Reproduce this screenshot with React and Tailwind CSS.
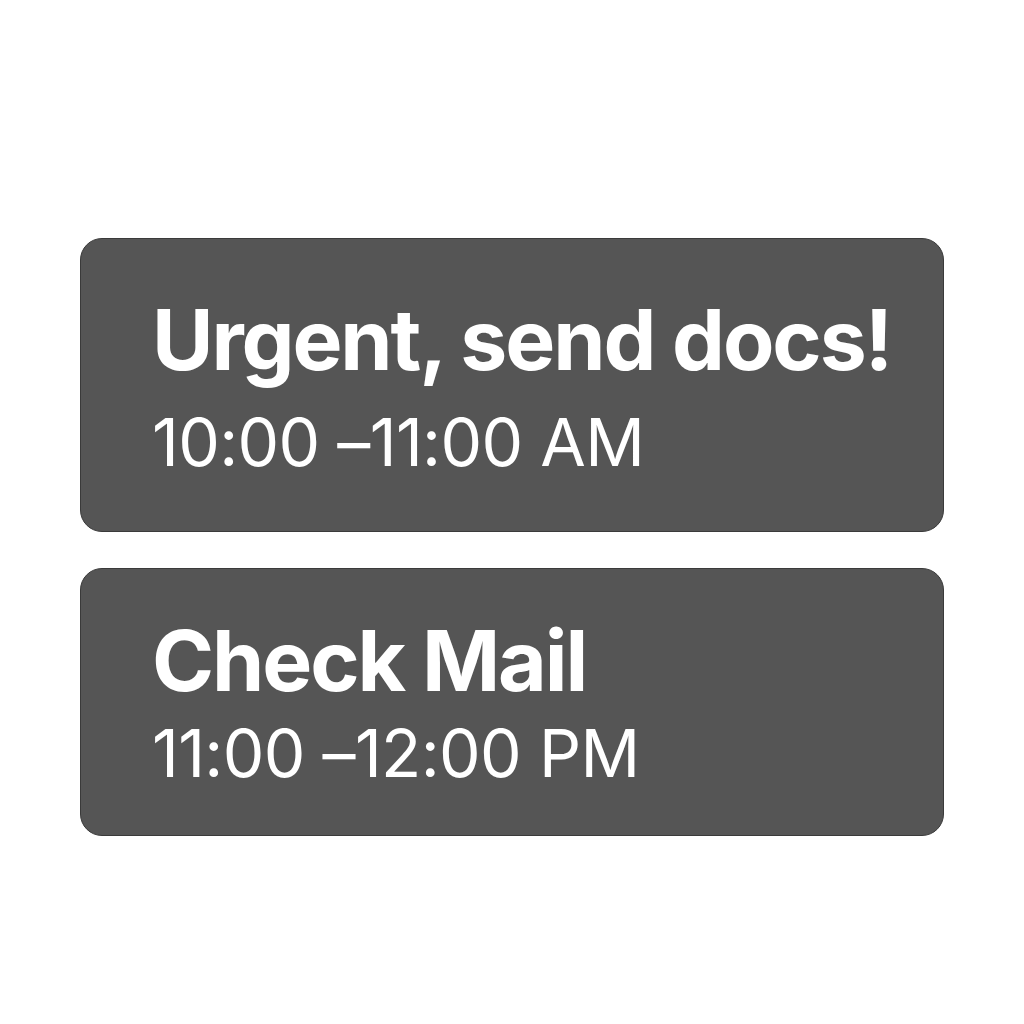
const events = [
  { title: "Urgent, send docs!", time: "10:00 –11:00 AM", box: "h-[294px] pt-[59px]", gap: "mt-[27px]" },
  { title: "Check Mail", time: "11:00 –12:00 PM", box: "h-[268px] pt-[50px]", gap: "mt-[17px]" },
];

export default function App() {
  return (
    <div className="w-[1024px] h-[1024px] bg-white pt-[238px] px-[80px]" style={{ fontFamily: 'Inter, "Noto Sans", sans-serif' }}>
      <div className="flex flex-col gap-[36px]">
        {events.map((e) => (
          <div key={e.title} className={`${e.box} rounded-[22px] bg-[#555555] border border-[#3a3a3a] pl-[71px] text-white`}>
            <div className="text-[84px] leading-none font-bold tracking-[-0.025em]">{e.title}</div>
            <div className={`${e.gap} text-[66px] leading-none font-normal tracking-[-0.01em]`}>{e.time}</div>
          </div>
        ))}
      </div>
    </div>
  );
}
